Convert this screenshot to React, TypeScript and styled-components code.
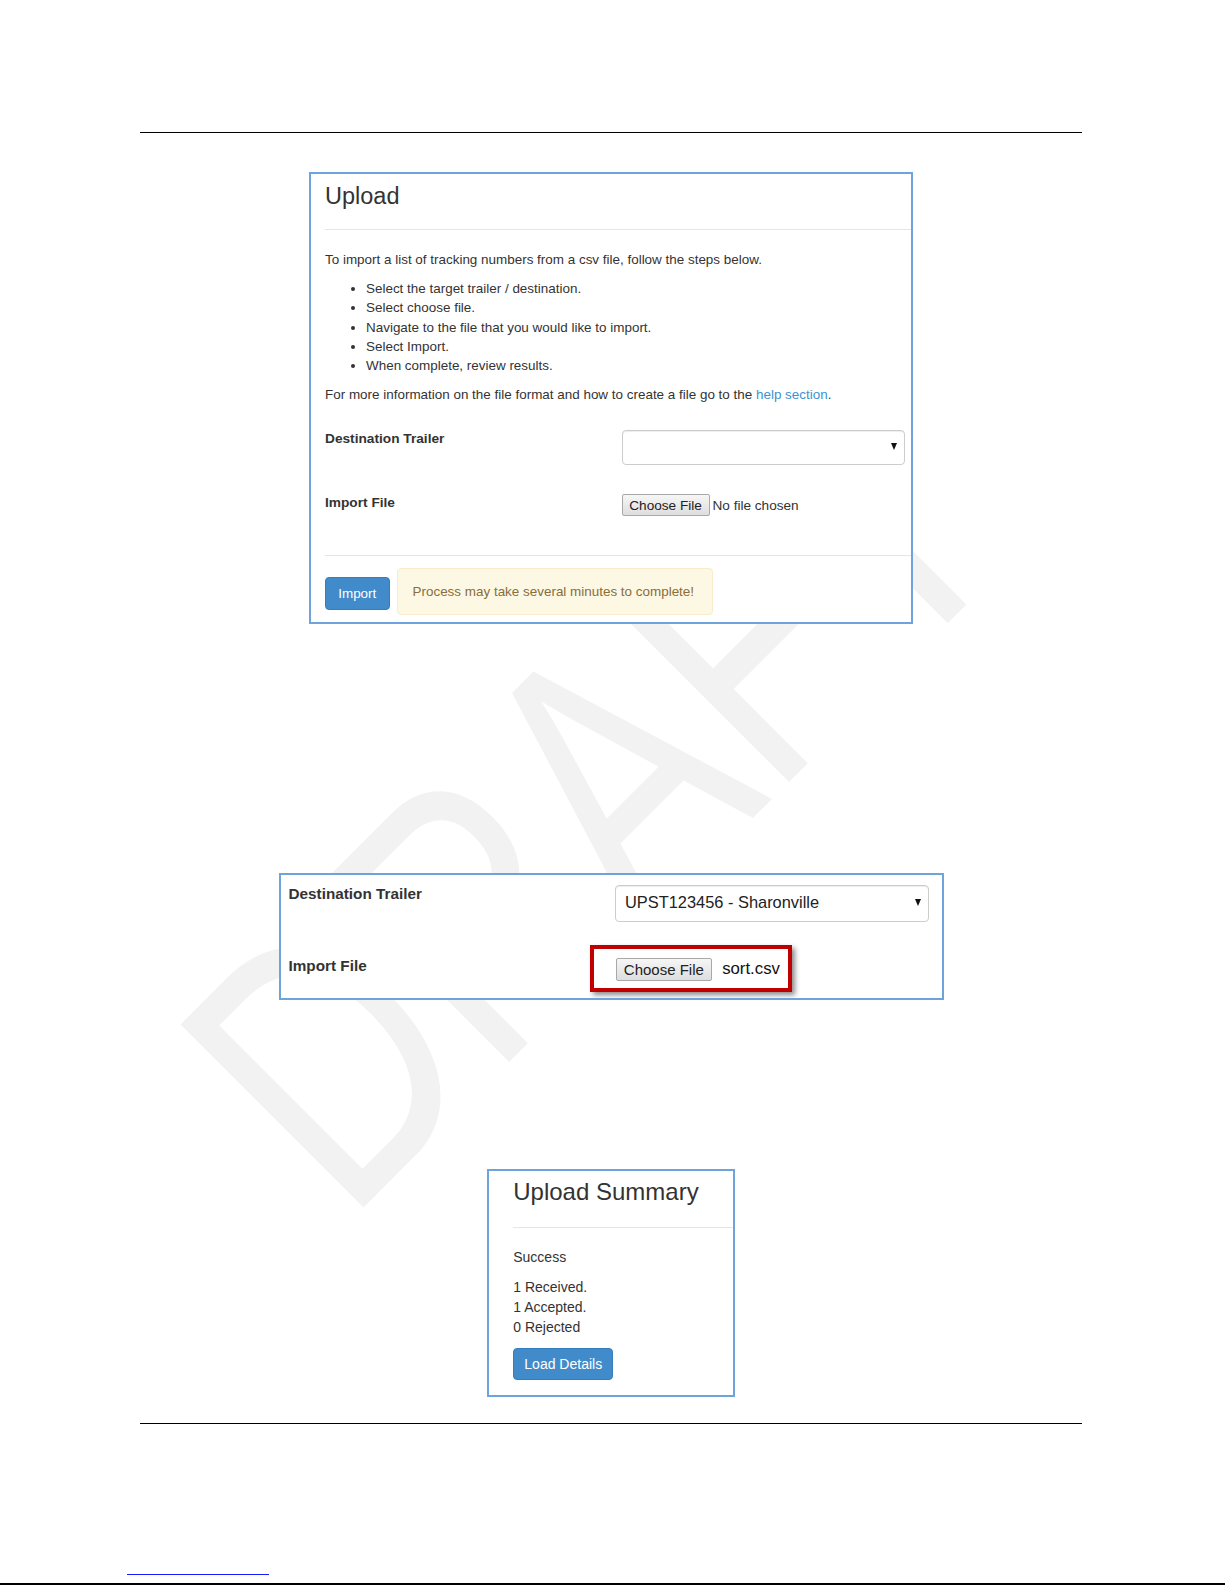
import React from "react";
import styled, { createGlobalStyle } from "styled-components";

const GlobalStyle = createGlobalStyle`
  html, body { margin: 0; padding: 0; background: #fff; }
  body { font-family: "Liberation Sans", Arial, sans-serif; color: #333; }
  * { box-sizing: border-box; }
`;

const Page = styled.div`
  position: relative;
  width: 1225px;
  height: 1585px;
  overflow: hidden;
  background: #fff;
`;

const Watermark = styled.div`
  position: absolute;
  left: 347px;
  top: 983px;
  font-family: "Liberation Sans", Arial, sans-serif;
  font-size: 285px;
  line-height: 285px;
  color: #f2f2f2;
  white-space: nowrap;
  transform-origin: 0 241px;
  transform: rotate(-45deg) scaleY(1.32);
  pointer-events: none;
  user-select: none;
  z-index: 0;
`;

const Column = styled.div`
  position: relative;
  z-index: 1;
  display: flex;
  flex-direction: column;
  align-items: center;
  padding: 132px 3px 0 0;
`;

const Rule = styled.div<{ $gap?: number }>`
  width: 942px;
  border-top: 1px solid #000;
  margin-top: ${(p) => p.$gap ?? 0}px;
`;

const Shot = styled.div<{ $w: number; $h: number; $gap: number; $pad: string }>`
  width: ${(p) => p.$w}px;
  height: ${(p) => p.$h}px;
  margin-top: ${(p) => p.$gap}px;
  padding: ${(p) => p.$pad};
  border: 2px solid #6fa3dc;
  background: #fff;
  overflow: hidden;
  display: flex;
  flex-direction: column;
  color: #333;
`;

const Heading = styled.h3<{ $size: number; $top: number; $bottom: number }>`
  margin: 0;
  font-weight: 400;
  font-size: ${(p) => p.$size}px;
  line-height: ${(p) => p.$size * 1.1}px;
  padding: ${(p) => p.$top}px 0 ${(p) => p.$bottom}px;
  border-bottom: 1px solid #e5e5e5;
  color: #333;
  white-space: nowrap;
`;

const Body = styled.div<{ $top: number; $size: number; $lh: number }>`
  padding-top: ${(p) => p.$top}px;
  font-size: ${(p) => p.$size}px;
  line-height: ${(p) => p.$lh}px;
`;

const Para = styled.p<{ $after: number }>`
  margin: 0 0 ${(p) => p.$after}px;
  white-space: nowrap;
`;

const Link = styled.a`
  color: #3b93cf;
  text-decoration: none;
`;

const Steps = styled.ul`
  margin: 0 0 9.6px;
  padding-left: 41px;
  list-style: disc;
  white-space: nowrap;
`;

const FormRow = styled.div<{ $cols: string; $gap: number }>`
  display: grid;
  grid-template-columns: ${(p) => p.$cols};
  align-items: start;
  margin-top: ${(p) => p.$gap}px;
`;

const Label = styled.label<{ $size: number; $lh: number; $top?: number }>`
  font-weight: 700;
  font-size: ${(p) => p.$size}px;
  line-height: ${(p) => p.$lh}px;
  padding-top: ${(p) => p.$top ?? 0}px;
  color: #333;
  white-space: nowrap;
`;

const SelectBox = styled.div<{ $h: number; $size: number; $top: number }>`
  height: ${(p) => p.$h}px;
  margin-top: ${(p) => p.$top}px;
  display: flex;
  align-items: center;
  justify-content: space-between;
  padding: 0 7px 2px 9px;
  background: #fff;
  border: 1px solid #ccc;
  border-radius: 4px;
  box-shadow: inset 0 1px 1px rgba(0, 0, 0, 0.075);
  font-size: ${(p) => p.$size}px;
  color: #222;
  white-space: nowrap;
`;

const Caret = styled.span`
  width: 0;
  height: 0;
  border-left: 3px solid transparent;
  border-right: 3px solid transparent;
  border-top: 7px solid #111;
  margin-left: auto;
`;

const FileInput = styled.div<{ $gap: number; $top?: number }>`
  display: flex;
  align-items: center;
  gap: ${(p) => p.$gap}px;
  margin-top: ${(p) => p.$top ?? 0}px;
  white-space: nowrap;
`;

const FileButton = styled.span<{ $h: number; $size: number; $padX: number }>`
  display: inline-flex;
  align-items: center;
  height: ${(p) => p.$h}px;
  padding: 0 ${(p) => p.$padX}px;
  font-size: ${(p) => p.$size}px;
  color: #222;
  background: linear-gradient(#f6f6f6, #dedede);
  border: 1px solid #a9a9a9;
  border-radius: 2px;
`;

const FileName = styled.span<{ $size: number; $color: string }>`
  font-size: ${(p) => p.$size}px;
  color: ${(p) => p.$color};
`;

const Highlight = styled.div`
  justify-self: start;
  margin-left: -25.5px;
  border: 4px solid #c00000;
  padding: 8.7px 8px 7px 22px;
  box-shadow: 3px 3px 5px rgba(0, 0, 0, 0.45);
`;

const Footer = styled.div`
  margin-top: 38.5px;
  border-top: 1px solid #e5e5e5;
  padding-top: 12px;
  display: flex;
  align-items: flex-start;
  gap: 7px;
`;

const PrimaryButton = styled.button<{ $w: number; $h: number; $size: number; $top?: number }>`
  width: ${(p) => p.$w}px;
  height: ${(p) => p.$h}px;
  margin-top: ${(p) => p.$top ?? 0}px;
  padding: 0;
  font-family: "Liberation Sans", Arial, sans-serif;
  font-size: ${(p) => p.$size}px;
  color: #fff;
  background: #428bca;
  border: 1px solid #357ebd;
  border-radius: 4px;
  white-space: nowrap;
`;

const Notice = styled.div`
  width: 316.5px;
  height: 47.5px;
  display: flex;
  align-items: center;
  padding: 0 15px;
  background: #fcf8e3;
  border: 1px solid #faebcc;
  border-radius: 4px;
  color: #8a6d3b;
  white-space: nowrap;
`;

const Lines = styled.div`
  display: flex;
  flex-direction: column;
  white-space: nowrap;
`;

const FooterLink = styled.div`
  align-self: flex-start;
  margin: 150px 0 0 127px;
  width: 142px;
  border-top: 1px solid #1a1aff;
`;

const PageEdge = styled.div`
  align-self: stretch;
  margin: 8px -3px 0 0;
  border-top: 2px solid #000;
`;

export default function App() {
  return (
    <Page>
      <GlobalStyle />
      <Watermark>DRAFT</Watermark>
      <Column>
        <Rule />

        <Shot $w={604} $h={452} $gap={39} $pad="0 0 0 14px">
          <Heading $size={23.5} $top={10} $bottom={19}>Upload</Heading>
          <Body $top={20.5} $size={13.45} $lh={19.2}>
            <Para $after={9.6}>
              To import a list of tracking numbers from a csv file, follow the steps below.
            </Para>
            <Steps>
              <li>Select the target trailer / destination.</li>
              <li>Select choose file.</li>
              <li>Navigate to the file that you would like to import.</li>
              <li>Select Import.</li>
              <li>When complete, review results.</li>
            </Steps>
            <Para $after={0}>
              For more information on the file format and how to create a file go to the{" "}
              <Link href="#">help section</Link>.
            </Para>

            <FormRow $cols="296.6px 283px" $gap={25}>
              <Label $size={13.7} $lh={19.2}>Destination Trailer</Label>
              <SelectBox $h={34.5} $size={13.45} $top={1.5}>
                <Caret />
              </SelectBox>
            </FormRow>

            <FormRow $cols="296.6px 283px" $gap={28.4}>
              <Label $size={13.7} $lh={19.2}>Import File</Label>
              <FileInput $gap={3} $top={0.6}>
                <FileButton $h={22.5} $size={13.6} $padX={6.7}>Choose File</FileButton>
                <FileName $size={13.6} $color="#333">No file chosen</FileName>
              </FileInput>
            </FormRow>

            <Footer>
              <PrimaryButton $w={64.5} $h={33.5} $size={13.45} $top={9}>Import</PrimaryButton>
              <Notice>Process may take several minutes to complete!</Notice>
            </Footer>
          </Body>
        </Shot>

        <Shot $w={665} $h={127} $gap={249} $pad="8.5px 0 0 8px">
          <FormRow $cols="326.5px 313.5px" $gap={0}>
            <Label $size={15.3} $lh={20}>Destination Trailer</Label>
            <SelectBox $h={37} $size={16.4} $top={1.5}>
              UPST123456 - Sharonville
              <Caret />
            </SelectBox>
          </FormRow>
          <FormRow $cols="326.5px 313.5px" $gap={23}>
            <Label $size={15.3} $lh={20} $top={11}>Import File</Label>
            <Highlight>
              <FileInput $gap={10}>
                <FileButton $h={23} $size={15} $padX={7.3}>Choose File</FileButton>
                <FileName $size={16.8} $color="#111">sort.csv</FileName>
              </FileInput>
            </Highlight>
          </FormRow>
        </Shot>

        <Shot $w={248.5} $h={228} $gap={169} $pad="0 0 0 24.5px">
          <Heading $size={24} $top={8.4} $bottom={21}>Upload Summary</Heading>
          <Body $top={19} $size={14} $lh={20}>
            <Para $after={10}>Success</Para>
            <Lines>
              <span>1 Received.</span>
              <span>1 Accepted.</span>
              <span>0 Rejected</span>
            </Lines>
            <PrimaryButton $w={100} $h={32} $size={14} $top={11}>Load Details</PrimaryButton>
          </Body>
        </Shot>

        <Rule $gap={26} />
        <FooterLink />
        <PageEdge />
      </Column>
    </Page>
  );
}
